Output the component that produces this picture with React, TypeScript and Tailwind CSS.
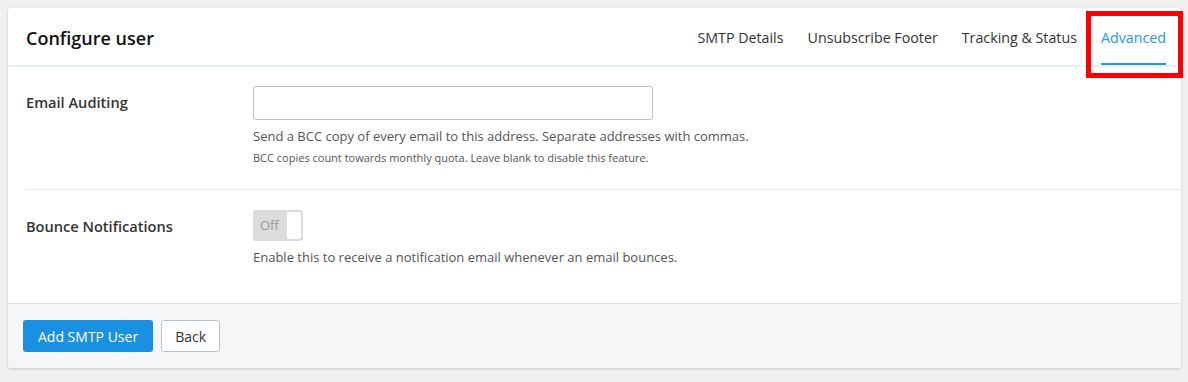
import React from 'react';

const TABS = ['SMTP Details', 'Unsubscribe Footer', 'Tracking & Status', 'Advanced'];

export default function App() {
  const active = 'Advanced';

  return (
    <div
      className="min-h-[382px] w-[1188px] bg-[#f0f0f0] pt-2 pl-2 pr-[7px]"
      style={{ fontFamily: '"Open Sans", "Noto Sans", sans-serif' }}
    >
      <div className="relative rounded-[3px] bg-white shadow-[0_1px_3px_rgba(0,0,0,0.18)]">
        {/* Header */}
        <div className="flex h-[59px] items-stretch justify-between border-b-2 border-[#e6f0f9] pl-[18px] pr-[15px]">
          <h1 className="flex items-center pt-[4px] text-[18px] font-semibold text-[#111]">Configure user</h1>
          <nav className="flex items-stretch gap-[24px]">
            {TABS.map(t => (
              <div
                key={t}
                className={
                  t === active
                    ? 'flex items-center border-b-2 border-[#1a9be6] pt-[5px] text-[14.25px] text-[#1a9be6]'
                    : 'flex items-center border-b-2 border-transparent pt-[5px] text-[14.25px] text-[#333]'
                }
              >
                {t}
              </div>
            ))}
          </nav>
        </div>

        {/* Email auditing */}
        <div className="ml-[18px] flex border-b border-[#e4e8ec] pt-[19px] pb-[22px]">
          <div className="flex h-[34px] w-[227px] items-center text-[14.6px] font-semibold text-[#333]">
            Email Auditing
          </div>
          <div className="flex flex-col">
            <input
              type="text"
              className="h-[34px] w-[400px] rounded-[3px] border border-[#b8c2cc] bg-white px-2 text-[14px] outline-none"
            />
            <p className="mt-[6px] text-[13px] leading-[20px] text-[#555]">
              Send a BCC copy of every email to this address. Separate addresses with commas.
            </p>
            <p className="mt-[3px] text-[11px] leading-[18px] text-[#555]">
              BCC copies count towards monthly quota. Leave blank to disable this feature.
            </p>
          </div>
        </div>

        {/* Bounce notifications */}
        <div className="ml-[18px] flex pt-[20px] pb-[36px]">
          <div className="flex h-[31px] w-[227px] items-center pt-[3px] text-[14.6px] font-semibold text-[#333]">
            Bounce Notifications
          </div>
          <div className="flex flex-col">
            <div className="flex h-[31px] w-[50px] items-center justify-between rounded-[3px] bg-[#dcdcdc] p-[2px] pl-[7px]">
              <span className="text-[13px] text-[#999]">Off</span>
              <span className="h-full w-[14px] rounded-[2px] bg-white" />
            </div>
            <p className="mt-[6px] text-[13px] leading-[20px] text-[#555]">
              Enable this to receive a notification email whenever an email bounces.
            </p>
          </div>
        </div>

        {/* Footer */}
        <div className="flex gap-2 rounded-b-[3px] border-t border-[#dde2e7] bg-[#f5f6f8] px-[15px] pt-4 pb-4">
          <button className="h-[32px] rounded-[3px] bg-[#1a90e0] px-[15px] text-[14px] text-white">
            Add SMTP User
          </button>
          <button className="h-[32px] rounded-[3px] border border-[#b8c4d0] bg-white px-[13px] text-[14px] text-[#333]">
            Back
          </button>
        </div>

        {/* Highlight annotation */}
        <div className="pointer-events-none absolute top-[3px] right-[-2px] h-[67px] w-[97px] border-[5px] border-[#ff0000]" />
      </div>
    </div>
  );
}
